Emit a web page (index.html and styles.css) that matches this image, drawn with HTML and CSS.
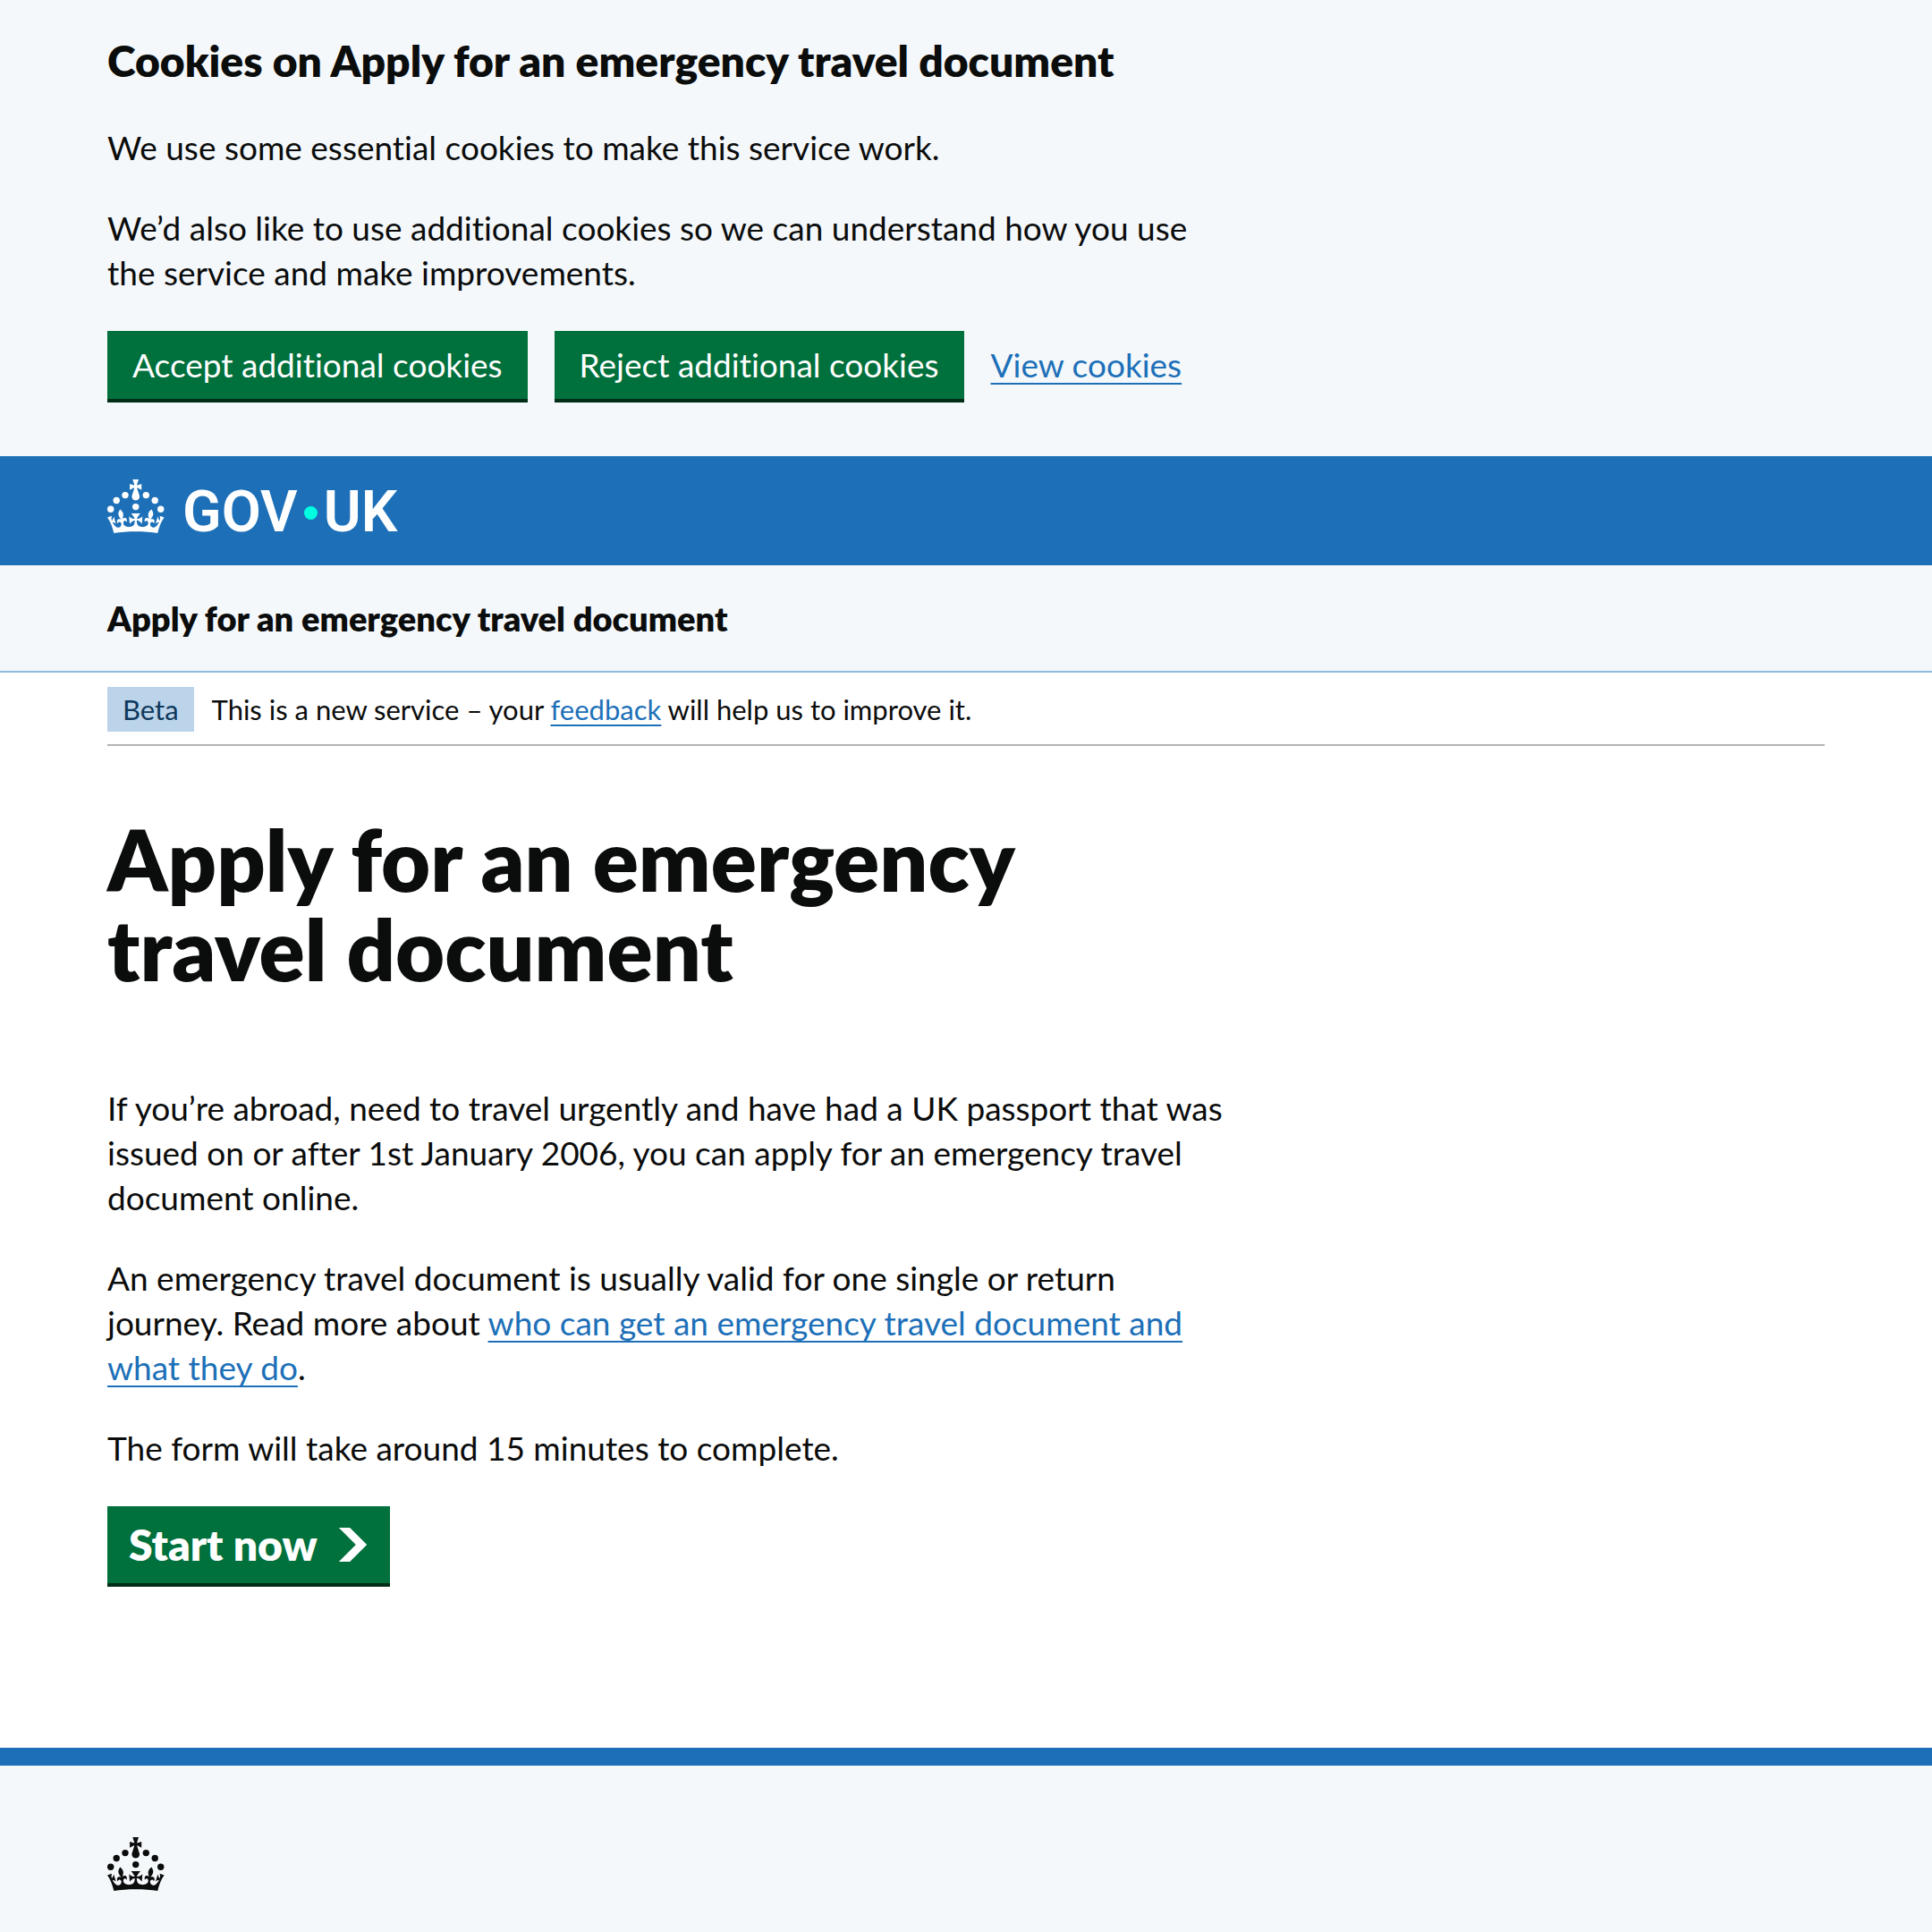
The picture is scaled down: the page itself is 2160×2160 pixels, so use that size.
FILE: index.html
```html
<!DOCTYPE html>
<html lang="en">
<head>
<meta charset="utf-8">
<meta name="viewport" content="width=device-width, initial-scale=1">
<title>Apply for an emergency travel document - GOV.UK</title>
<link rel="stylesheet" href="styles.css">
</head>
<body>
<svg class="sprite" aria-hidden="true">
  <symbol id="crown" viewBox="0 0 64 60">
    <circle cx="20" cy="17.6" r="3.7"/>
    <circle cx="10.2" cy="23.5" r="3.7"/>
    <circle cx="3.7" cy="33.2" r="3.7"/>
    <circle cx="31.7" cy="30.6" r="3.7"/>
    <circle cx="43.3" cy="17.6" r="3.7"/>
    <circle cx="53.2" cy="23.5" r="3.7"/>
    <circle cx="59.7" cy="33.2" r="3.7"/>
    <path d="M33.1,9.8c.2-.1.3-.3.5-.5l4.6,2.4v-6.8l-4.6,1.5c-.1-.2-.3-.3-.5-.5l1.9-5.9h-6.7l1.9,5.9c-.2.1-.3.3-.5.5l-4.6-1.5v6.8l4.6-2.4c.1.2.3.3.5.5l-2.6,8c-.9,2.8,1.2,5.7,4.1,5.7h0c3,0,5.1-2.9,4.1-5.7l-2.6-8ZM37,37.9s-3.4,3.8-4.1,6.1c2.2,0,4.2-.5,6.4-2.8l-.7,8.5c-2-2.8-4.4-4.1-5.7-3.8.1,3.1.5,6.7,5.8,7.2,3.7.3,6.7-1.5,7-3.8.4-2.6-2-4.3-3.7-1.6-1.4-4.5,2.4-6.1,4.9-3.2-1.9-4.5-1.8-7.7,2.4-10.9,3,4,2.6,7.3-1.2,11.1,2.4-1.3,6.2,0,4,4.6-1.2-2.8-3.7-2.2-4.2.2-.3,1.7.7,3.7,3,4.2,1.9.3,4.7-.9,7-5.9-1.3,0-2.4.7-3.9,1.7l2.4-8c.6,2.3,1.4,3.7,2.2,4.5.6-1.6.5-2.8,0-5.3l5,1.8c-2.6,3.6-5.2,8.7-7.3,17.5-7.4-1.1-15.7-1.7-24.5-1.7h0c-8.8,0-17.1.6-24.5,1.7-2.1-8.9-4.7-13.9-7.3-17.5l5-1.8c-.5,2.5-.6,3.7,0,5.3.8-.8,1.6-2.3,2.2-4.5l2.4,8c-1.5-1-2.6-1.7-3.9-1.7,2.3,5,5.2,6.2,7,5.9,2.3-.4,3.3-2.4,3-4.2-.5-2.4-3-3.1-4.2-.2-2.2-4.6,1.6-6,4-4.6-3.7-3.7-4.2-7.1-1.2-11.1,4.2,3.2,4.3,6.4,2.4,10.9,2.5-2.8,6.3-1.3,4.9,3.2-1.8-2.7-4.1-1-3.7,1.6.3,2.3,3.3,4.1,7,3.8,5.4-.5,5.7-4.2,5.8-7.2-1.3-.2-3.7,1-5.7,3.8l-.7-8.5c2.2,2.3,4.2,2.7,6.4,2.8-.7-2.3-4.1-6.1-4.1-6.1h10.6,0Z"/>
  </symbol>
</svg>

<section class="cookie-banner" aria-label="Cookies on Apply for an emergency travel document">
  <div class="measure">
    <h2 class="cookie-title">Cookies on Apply for an emergency travel document</h2>
    <p class="body">We use some essential cookies to make this service work.</p>
    <p class="body">We’d also like to use additional cookies so we can understand how you use the service and make improvements.</p>
    <div class="button-group">
      <button type="button" class="button">Accept additional cookies</button>
      <button type="button" class="button">Reject additional cookies</button>
      <a class="link" href="#cookies">View cookies</a>
    </div>
  </div>
</section>

<header class="header">
  <a class="logo" href="#home" aria-label="GOV.UK">
    <svg class="crown" aria-hidden="true"><use href="#crown"/></svg>
    <span class="wordmark"><span>GOV</span><span class="dot"></span><span>UK</span></span>
  </a>
</header>

<div class="service-bar">
  <a class="service-name" href="#start">Apply for an emergency travel document</a>
</div>

<div class="container">
  <div class="phase-banner">
    <strong class="tag">Beta</strong>
    <span>This is a new service – your <a class="link" href="#feedback">feedback</a> will help us to improve it.</span>
  </div>

  <main class="main">
    <div class="measure">
      <h1 class="heading">Apply for an emergency travel document</h1>
      <p class="body">If you’re abroad, need to travel urgently and have had a UK passport that was issued on or after 1st January 2006, you can apply for an emergency travel document online.</p>
      <p class="body">An emergency travel document is usually valid for one single or return journey. Read more about <a class="link" href="#eligibility">who can get an emergency travel document and what they do</a>.</p>
      <p class="body">The form will take around 15 minutes to complete.</p>
      <button type="button" class="button button-start">Start now
        <svg class="chevron" viewBox="0 0 33 40" aria-hidden="true"><path fill="currentColor" d="M0 0h13l20 20-20 20H0l20-20z"/></svg>
      </button>
    </div>
  </main>
</div>

<footer class="footer">
  <svg class="crown" aria-hidden="true"><use href="#crown"/></svg>
</footer>
</body>
</html>
```
FILE: styles.css
```css
:root {
  --blue: #1d70b8;
  --tint: #f4f8fb;
  --ink: #0b0c0c;
  --green: #00703c;
  --gutter: 120px;
}

* {
  box-sizing: border-box;
}

body {
  margin: 0;
  color: var(--ink);
  background: var(--tint);
  font-family: Lato, "Liberation Sans", sans-serif;
  font-size: 37px;
  font-variant-ligatures: none;
  line-height: 50px;
}

.sprite {
  display: none;
}

.measure {
  max-width: 1260px;
}

.body {
  margin: 0 0 40px;
}

.link {
  color: var(--blue);
  text-decoration: underline;
  text-decoration-thickness: 2px;
  text-underline-offset: 6px;
  text-decoration-skip-ink: none;
}

/* Cookie banner */
.cookie-banner {
  padding: 38px var(--gutter) 60px;
}

.cookie-title {
  margin: 0 0 42px;
  font-size: 48px;
  font-weight: 800;
  line-height: 60px;
}

.button-group {
  display: flex;
  flex-wrap: wrap;
  align-items: center;
  gap: 30px;
}

.button {
  display: inline-flex;
  align-items: center;
  height: 80px;
  padding: 0 28px 4px;
  border: 0;
  color: #fff;
  background: var(--green);
  box-shadow: inset 0 -4px 0 #002d18;
  font: inherit;
  cursor: pointer;
}

.button-start {
  gap: 22px;
  height: 90px;
  padding: 0 24px 4px;
  font-size: 48px;
  font-weight: 800;
}

.button-group .link {
  padding-bottom: 4px;
}

.chevron {
  width: 35px;
  height: 38px;
}

/* Header */
.header {
  padding: 26px var(--gutter) 36px;
  color: #fff;
  background: var(--blue);
}

.logo {
  display: inline-flex;
  align-items: flex-end;
  gap: 20px;
  vertical-align: top;
  color: inherit;
  text-decoration: none;
}

.crown {
  display: block;
  width: 64px;
  height: 60px;
  fill: currentColor;
}

.wordmark {
  display: flex;
  align-items: center;
  gap: 7px;
  font-family: Roboto, "Liberation Sans", sans-serif;
  font-size: 64px;
  font-weight: 600;
  line-height: 46px;
}

.dot {
  width: 15px;
  height: 15px;
  border-radius: 50%;
  background: #00ffe0;
}

/* Service name */
.service-bar {
  display: flex;
  padding: 34px var(--gutter);
  border-bottom: 2px solid #8eb8dc;
}

.service-name {
  color: inherit;
  font-size: 38px;
  font-weight: 800;
  text-decoration: none;
}

/* Page content */
.container {
  padding: 0 var(--gutter);
  background: #fff;
}

.phase-banner {
  display: flex;
  align-items: center;
  gap: 20px;
  padding: 16px 0 14px;
  border-bottom: 2px solid #b1b4b6;
  font-size: 31px;
}

.phase-banner .link {
  text-underline-offset: 5px;
}

.tag {
  padding: 0 17px;
  color: #0f385c;
  background: #bbd4ea;
  font-weight: 400;
}

.main {
  padding: 76px 0 180px;
}

.heading {
  margin: 0 0 104px;
  font-size: 95px;
  font-weight: 800;
  line-height: 100px;
}

/* Footer */
.footer {
  padding: 80px var(--gutter);
  border-top: 20px solid var(--blue);
}
```
